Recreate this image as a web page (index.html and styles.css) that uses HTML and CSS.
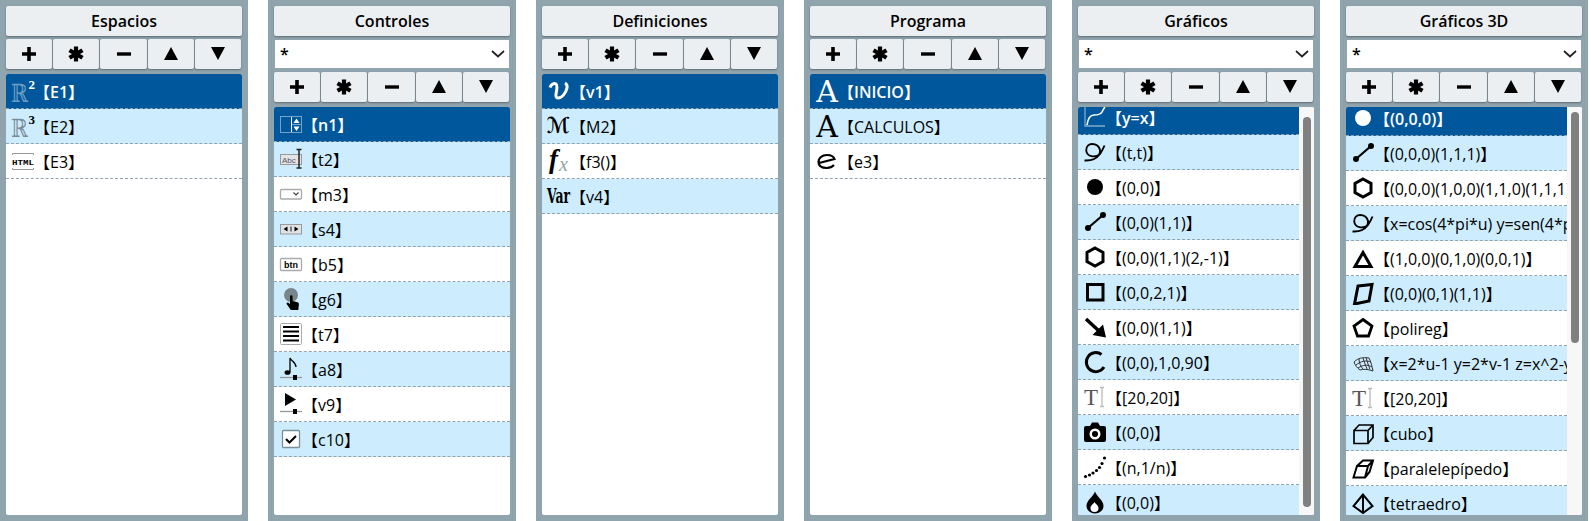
FILE: index.html
```html
<!DOCTYPE html>
<html lang="es">
<head>
<meta charset="utf-8">
<title>Descartes</title>
<link rel="stylesheet" href="styles.css">
</head>
<body>
<svg class="sprite" aria-hidden="true">
  <symbol id="b-plus" viewBox="0 0 24 24"><path d="M5 12h14M12 5v14" fill="none" stroke="#000" stroke-width="3.6"/></symbol>
  <symbol id="b-star" viewBox="0 0 24 24"><path d="M12 4.500v15M5.500 8.200l13 7.600M18.500 8.200l-13 7.600" fill="none" stroke="#000" stroke-width="4.200"/></symbol>
  <symbol id="b-minus" viewBox="0 0 24 24"><path d="M5 12h14" fill="none" stroke="#000" stroke-width="3.400"/></symbol>
  <symbol id="b-up" viewBox="0 0 24 24"><path d="M12 5l7 13H5z"/></symbol>
  <symbol id="b-down" viewBox="0 0 24 24"><path d="M5 5h14l-7 13z"/></symbol>

  <symbol id="i-spin" viewBox="0 0 24 24"><rect x="1.500" y="4.500" width="21" height="16" fill="none" stroke="currentColor" stroke-opacity=".45"/><path d="M12.500 5v15" stroke="currentColor"/><path d="M13 12.500h9" stroke="currentColor" stroke-opacity=".45"/><path d="M17.500 6.500l3 4.500h-6zM17.500 19l-3-4.500h6z" fill="currentColor"/></symbol>
  <symbol id="i-menu" viewBox="0 0 24 24"><rect x="1.500" y="7.500" width="21" height="9.500" rx="1" fill="#fff" stroke="#aaa" stroke-width="1.300"/><path d="M14.500 10.500l2.500 2.500 2.500-2.500" fill="none" stroke="#444" stroke-width="1.200"/></symbol>
  <symbol id="i-scroll" viewBox="0 0 24 24"><rect x="1.500" y="7.500" width="21" height="9.500" fill="#dfe3e6" stroke="#999"/><path d="M8.500 9.500v5l-4-2.500zM15.500 9.500v5l4-2.500z"/><path d="M12 9.500v5" stroke="#444" stroke-width="1.300"/></symbol>
  <symbol id="i-graphic" viewBox="0 0 24 24"><circle cx="12" cy="8" r="7" fill="#78868c"/><path d="M11 9.500a1.300 1.300 0 0 1 2.600 0V14l5 1.200c1.400.4 1.400 1.800 1.200 3.200L19.300 23h-7.500L7.800 17.200c-.8-1.200.8-2.200 1.800-1.300l1.400 1.200z"/></symbol>
  <symbol id="i-text" viewBox="0 0 24 24"><rect x="1.500" y="1.500" width="21" height="21" rx="1" fill="#fff" stroke="#aaa"/><path d="M4 5h16M4 9.500h16M4 14h16M4 18.500h16" stroke="#000" stroke-width="2.200"/></symbol>
  <symbol id="i-audio" viewBox="0 0 24 24"><ellipse cx="8.500" cy="15.500" rx="3" ry="2.300"/><path d="M11 15V1c1 3 6 4 6 9" fill="none" stroke="#000" stroke-width="1.300"/><path d="M1 20.500h22" stroke="#999" stroke-width="1.300"/><rect x="14" y="18" width="4" height="5"/></symbol>
  <symbol id="i-video" viewBox="0 0 24 24"><path d="M6 1l11 6.500L6 14z"/><path d="M1 19.500h22" stroke="#999" stroke-width="1.300"/><rect x="14" y="17" width="4" height="5"/></symbol>
  <symbol id="i-check" viewBox="0 0 24 24"><rect x="3.500" y="3.500" width="17" height="17" rx="1" fill="#fff" stroke="#78909c" stroke-width="1.300"/><path d="M7 12l3.500 3.500L17 9" fill="none" stroke="#000" stroke-width="2"/></symbol>

  <symbol id="i-v" viewBox="0 0 24 24"><path d="M3 8.500C4 5 7 4 9 5c2 2 .5 7 0 10-.3 2 0 4 2 4 4 0 8-5 9-10 .4-2-.3-4-2-5" fill="none" stroke="currentColor" stroke-width="3"/></symbol>
  <symbol id="i-e" viewBox="0 0 24 24"><path d="M4 14L19.500 10C18.500 7 15 6 12 6 7 6 3.500 9 3.500 13S7 19 12 19c3 0 5-1 7-3" fill="none" stroke="currentColor" stroke-width="2.200"/></symbol>

  <symbol id="i-curve" viewBox="0 0 24 24"><path d="M2 0v21h20" fill="none" stroke="currentColor" stroke-opacity=".5" stroke-width="1.300"/><path d="M4 20c1-7 3-10 7-10s7-1 8-3 2-4 3-5" fill="none" stroke="currentColor" stroke-width="1.600"/></symbol>
  <symbol id="i-loop" viewBox="0 0 24 24"><path d="M1.500 20.500C8 21 14 18 17 14c2-3 3.500-6 4.500-8.500M17 14c-5 4-13 3-13.800-3.500C3 6 6 4 9 4c4 0 7 2 8 6 .3 2-1 5-2 6" fill="none" stroke="currentColor" stroke-width="1.900"/></symbol>
  <symbol id="i-dot" viewBox="0 0 24 24"><circle cx="12" cy="12" r="8" fill="currentColor"/></symbol>
  <symbol id="i-seg" viewBox="0 0 24 24"><path d="M5 18L20 5" stroke="currentColor" stroke-width="2.200"/><circle cx="5" cy="18" r="3" fill="currentColor"/><circle cx="20" cy="5" r="3" fill="currentColor"/></symbol>
  <symbol id="i-hex" viewBox="0 0 24 24"><path d="M12 3l8 4.500v9L12 21l-8-4.500v-9z" fill="none" stroke="currentColor" stroke-width="3"/></symbol>
  <symbol id="i-rect" viewBox="0 0 24 24"><rect x="4.500" y="4.500" width="15.500" height="15.500" fill="none" stroke="currentColor" stroke-width="3"/></symbol>
  <symbol id="i-arrow" viewBox="0 0 24 24"><path d="M3 4l13 12" stroke="currentColor" stroke-width="3.500"/><path d="M23 22.500L9.500 20 20 9.500z" fill="currentColor"/></symbol>
  <symbol id="i-arc" viewBox="0 0 24 24"><path d="M18.500 4.500A9.500 9.500 0 1 0 21 17" fill="none" stroke="currentColor" stroke-width="3"/></symbol>
  <symbol id="i-cam" viewBox="0 0 24 24"><path d="M3 6h4l2-3.500h6L17 6h4a2 2 0 0 1 2 2v12a2 2 0 0 1-2 2H3a2 2 0 0 1-2-2V8a2 2 0 0 1 2-2z"/><circle cx="12" cy="14" r="5.500" fill="#fff"/><circle cx="12" cy="14" r="3"/></symbol>
  <symbol id="i-dots" viewBox="0 0 24 24"><g fill="#000"><circle cx="2.500" cy="21.500" r="1.600"/><circle cx="6.500" cy="20" r="1.600"/><circle cx="10" cy="18" r="1.600"/><circle cx="13.500" cy="15.500" r="1.600"/><circle cx="16.500" cy="12.500" r="1.600"/><circle cx="19" cy="8.500" r="1.600"/><circle cx="21.500" cy="3" r="1.600"/></g></symbol>
  <symbol id="i-drop" viewBox="0 0 24 24"><path d="M12 1.500c-1.500 5-8.500 8.500-8.500 14.500a8.500 7.500 0 0 0 17 0c0-6-7-9.500-8.500-14.500z"/><path d="M11.500 12c-1 2-4 3.500-4 6a4 4 0 0 0 8 0c0-2.500-3-4-4-6z" fill="#fff"/></symbol>

  <symbol id="i-beam" viewBox="0 0 24 24"><path d="M17 2.500h4M17 21.500h4M19 2.500v19" fill="none" stroke="#bbb" stroke-width="1.300"/></symbol>
  <symbol id="i-tri" viewBox="0 0 24 24"><path d="M12 6.500l8 14H4z" fill="none" stroke="currentColor" stroke-width="3"/></symbol>
  <symbol id="i-face" viewBox="0 0 24 24"><path d="M7 5l14-1.500-3 16.500-14.500 3z" fill="none" stroke="currentColor" stroke-width="3"/></symbol>
  <symbol id="i-pent" viewBox="0 0 24 24"><path d="M12 3.500l9 6.500-3.500 10h-11L3 10z" fill="none" stroke="currentColor" stroke-width="2.800"/></symbol>
  <symbol id="i-mesh" viewBox="0 0 24 24"><path d="M3 11C7 7 12 6 18 7c2 4 3 8 4 13-5-2-10-2-13-1-3-2-5-5-6-8zM5 14c5-4 10-5 15-3M7 17c5-3 9-4 14-1M8 8c0 4 2 8 4 10M12 7c1 4 3 8 4 11M15 6.500c1 4 3 9 4 12" fill="none" stroke="#333" stroke-width="1"/></symbol>
  <symbol id="i-cube" viewBox="0 0 24 24"><path d="M3 9.500h14v13H3zM3 9.500L8 4h14v12.500l-5 6M17 9.500L22 4" fill="none" stroke="currentColor" stroke-width="1.700"/></symbol>
  <symbol id="i-para" viewBox="0 0 24 24"><path d="M6 10h11l-3 11.500H2.500zM6 10l6-5.500h10L18.500 16 14 21.500M17 10l5-5.500" fill="none" stroke="currentColor" stroke-width="2"/></symbol>
  <symbol id="i-tetra" viewBox="0 0 24 24"><path d="M12 3.500L2.500 15 12 22l9.500-7zM12 3.500V22" fill="none" stroke="currentColor" stroke-width="2"/></symbol>
</svg>

<main class="app">

  <section class="panel">
    <h2 class="title">Espacios</h2>
    <div class="tools">
      <button class="tool"><svg class="tg"><use href="#b-plus"/></svg></button>
      <button class="tool"><svg class="tg"><use href="#b-star"/></svg></button>
      <button class="tool"><svg class="tg"><use href="#b-minus"/></svg></button>
      <button class="tool"><svg class="tg"><use href="#b-up"/></svg></button>
      <button class="tool"><svg class="tg"><use href="#b-down"/></svg></button>
    </div>
    <div class="listbox">
      <ul class="list">
        <li class="row sel"><svg class="ic" viewBox="0 0 24 24"><text x="0" y="23" class="t-bb" textLength="17" lengthAdjust="spacingAndGlyphs">ℝ</text><text x="17.500" y="10" class="t-sup">2</text></svg><span class="lbl">【E1】</span></li>
        <li class="row"><svg class="ic" viewBox="0 0 24 24"><text x="0" y="23" class="t-bb" textLength="17" lengthAdjust="spacingAndGlyphs">ℝ</text><text x="17.500" y="10" class="t-sup">3</text></svg><span class="lbl">【E2】</span></li>
        <li class="row"><svg class="ic" viewBox="0 0 24 24"><path d="M1.500 6V4.500h21V6M1.500 19v1.500h21V19" fill="none" stroke="#999"/><text x="1" y="15.500" class="t-html" textLength="22" lengthAdjust="spacingAndGlyphs">HTML</text></svg><span class="lbl">【E3】</span></li>
      </ul>
    </div>
  </section>

  <section class="panel">
    <h2 class="title">Controles</h2>
    <select class="filter"><option>*</option></select>
    <div class="tools">
      <button class="tool"><svg class="tg"><use href="#b-plus"/></svg></button>
      <button class="tool"><svg class="tg"><use href="#b-star"/></svg></button>
      <button class="tool"><svg class="tg"><use href="#b-minus"/></svg></button>
      <button class="tool"><svg class="tg"><use href="#b-up"/></svg></button>
      <button class="tool"><svg class="tg"><use href="#b-down"/></svg></button>
    </div>
    <div class="listbox">
      <ul class="list">
        <li class="row sel"><svg class="ic"><use href="#i-spin"/></svg><span class="lbl">【n1】</span></li>
        <li class="row"><svg class="ic" viewBox="0 0 24 24"><rect x="1.500" y="7.500" width="21" height="10" fill="#e4e4e4" stroke="#999"/><text x="3" y="16" class="t-abc">Abc</text><path d="M17.500 2.500h5M17.500 21h5M20 2.500V21" fill="none" stroke="#222" stroke-width="1.500"/></svg><span class="lbl">【t2】</span></li>
        <li class="row"><svg class="ic"><use href="#i-menu"/></svg><span class="lbl">【m3】</span></li>
        <li class="row"><svg class="ic"><use href="#i-scroll"/></svg><span class="lbl">【s4】</span></li>
        <li class="row"><svg class="ic" viewBox="0 0 24 24"><rect x="1.500" y="6.500" width="21" height="12" rx="1" fill="#fff" stroke="#aaa" stroke-width="1.300"/><text x="12" y="16" class="t-btn">btn</text></svg><span class="lbl">【b5】</span></li>
        <li class="row"><svg class="ic"><use href="#i-graphic"/></svg><span class="lbl">【g6】</span></li>
        <li class="row"><svg class="ic"><use href="#i-text"/></svg><span class="lbl">【t7】</span></li>
        <li class="row"><svg class="ic"><use href="#i-audio"/></svg><span class="lbl">【a8】</span></li>
        <li class="row"><svg class="ic"><use href="#i-video"/></svg><span class="lbl">【v9】</span></li>
        <li class="row"><svg class="ic"><use href="#i-check"/></svg><span class="lbl">【c10】</span></li>
      </ul>
    </div>
  </section>

  <section class="panel">
    <h2 class="title">Definiciones</h2>
    <div class="tools">
      <button class="tool"><svg class="tg"><use href="#b-plus"/></svg></button>
      <button class="tool"><svg class="tg"><use href="#b-star"/></svg></button>
      <button class="tool"><svg class="tg"><use href="#b-minus"/></svg></button>
      <button class="tool"><svg class="tg"><use href="#b-up"/></svg></button>
      <button class="tool"><svg class="tg"><use href="#b-down"/></svg></button>
    </div>
    <div class="listbox">
      <ul class="list">
        <li class="row sel"><svg class="ic"><use href="#i-v"/></svg><span class="lbl">【v1】</span></li>
        <li class="row"><svg class="ic" viewBox="0 0 24 24"><text x="0" y="19" class="t-m" textLength="23" lengthAdjust="spacingAndGlyphs">ℳ</text></svg><span class="lbl">【M2】</span></li>
        <li class="row"><svg class="ic" viewBox="0 0 24 24"><text x="2" y="19" class="t-f">f</text><text x="12" y="22" class="t-x">x</text></svg><span class="lbl">【f3()】</span></li>
        <li class="row"><svg class="ic" viewBox="0 0 24 24"><text x="0" y="19" class="t-var" textLength="23" lengthAdjust="spacingAndGlyphs">Var</text></svg><span class="lbl">【v4】</span></li>
      </ul>
    </div>
  </section>

  <section class="panel">
    <h2 class="title">Programa</h2>
    <div class="tools">
      <button class="tool"><svg class="tg"><use href="#b-plus"/></svg></button>
      <button class="tool"><svg class="tg"><use href="#b-star"/></svg></button>
      <button class="tool"><svg class="tg"><use href="#b-minus"/></svg></button>
      <button class="tool"><svg class="tg"><use href="#b-up"/></svg></button>
      <button class="tool"><svg class="tg"><use href="#b-down"/></svg></button>
    </div>
    <div class="listbox">
      <ul class="list">
        <li class="row sel"><svg class="ic" viewBox="0 0 24 24"><text x="12" y="23" class="t-a">A</text></svg><span class="lbl">【INICIO】</span></li>
        <li class="row"><svg class="ic" viewBox="0 0 24 24"><text x="12" y="23" class="t-a">A</text></svg><span class="lbl">【CALCULOS】</span></li>
        <li class="row"><svg class="ic"><use href="#i-e"/></svg><span class="lbl">【e3】</span></li>
      </ul>
    </div>
  </section>

  <section class="panel">
    <h2 class="title">Gráficos</h2>
    <select class="filter"><option>*</option></select>
    <div class="tools">
      <button class="tool"><svg class="tg"><use href="#b-plus"/></svg></button>
      <button class="tool"><svg class="tg"><use href="#b-star"/></svg></button>
      <button class="tool"><svg class="tg"><use href="#b-minus"/></svg></button>
      <button class="tool"><svg class="tg"><use href="#b-up"/></svg></button>
      <button class="tool"><svg class="tg"><use href="#b-down"/></svg></button>
    </div>
    <div class="listbox">
      <ul class="list scrolled-7">
        <li class="row sel"><svg class="ic"><use href="#i-curve"/></svg><span class="lbl">【y=x】</span></li>
        <li class="row"><svg class="ic"><use href="#i-loop"/></svg><span class="lbl">【(t,t)】</span></li>
        <li class="row"><svg class="ic"><use href="#i-dot"/></svg><span class="lbl">【(0,0)】</span></li>
        <li class="row"><svg class="ic"><use href="#i-seg"/></svg><span class="lbl">【(0,0)(1,1)】</span></li>
        <li class="row"><svg class="ic"><use href="#i-hex"/></svg><span class="lbl">【(0,0)(1,1)(2,-1)】</span></li>
        <li class="row"><svg class="ic"><use href="#i-rect"/></svg><span class="lbl">【(0,0,2,1)】</span></li>
        <li class="row"><svg class="ic"><use href="#i-arrow"/></svg><span class="lbl">【(0,0)(1,1)】</span></li>
        <li class="row"><svg class="ic"><use href="#i-arc"/></svg><span class="lbl">【(0,0),1,0,90】</span></li>
        <li class="row"><svg class="ic" viewBox="0 0 24 24"><text x="8" y="20" class="t-t">T</text><use href="#i-beam" width="24" height="24"/></svg><span class="lbl">【[20,20]】</span></li>
        <li class="row"><svg class="ic"><use href="#i-cam"/></svg><span class="lbl">【(0,0)】</span></li>
        <li class="row"><svg class="ic"><use href="#i-dots"/></svg><span class="lbl">【(n,1/n)】</span></li>
        <li class="row"><svg class="ic"><use href="#i-drop"/></svg><span class="lbl">【(0,0)】</span></li>
      </ul>
      <div class="track"><div class="thumb thumb-2d"></div></div>
    </div>
  </section>

  <section class="panel">
    <h2 class="title">Gráficos 3D</h2>
    <select class="filter"><option>*</option></select>
    <div class="tools">
      <button class="tool"><svg class="tg"><use href="#b-plus"/></svg></button>
      <button class="tool"><svg class="tg"><use href="#b-star"/></svg></button>
      <button class="tool"><svg class="tg"><use href="#b-minus"/></svg></button>
      <button class="tool"><svg class="tg"><use href="#b-up"/></svg></button>
      <button class="tool"><svg class="tg"><use href="#b-down"/></svg></button>
    </div>
    <div class="listbox">
      <ul class="list scrolled-6">
        <li class="row sel"><svg class="ic"><use href="#i-dot"/></svg><span class="lbl">【(0,0,0)】</span></li>
        <li class="row"><svg class="ic"><use href="#i-seg"/></svg><span class="lbl">【(0,0,0)(1,1,1)】</span></li>
        <li class="row"><svg class="ic"><use href="#i-hex"/></svg><span class="lbl">【(0,0,0)(1,0,0)(1,1,0)(1,1,1)】</span></li>
        <li class="row"><svg class="ic"><use href="#i-loop"/></svg><span class="lbl">【x=cos(4*pi*u) y=sen(4*pi*u) z=u】</span></li>
        <li class="row"><svg class="ic"><use href="#i-tri"/></svg><span class="lbl">【(1,0,0)(0,1,0)(0,0,1)】</span></li>
        <li class="row"><svg class="ic"><use href="#i-face"/></svg><span class="lbl">【(0,0)(0,1)(1,1)】</span></li>
        <li class="row"><svg class="ic"><use href="#i-pent"/></svg><span class="lbl">【polireg】</span></li>
        <li class="row"><svg class="ic"><use href="#i-mesh"/></svg><span class="lbl">【x=2*u-1 y=2*v-1 z=x^2-y^2】</span></li>
        <li class="row"><svg class="ic" viewBox="0 0 24 24"><text x="8" y="20" class="t-t">T</text><use href="#i-beam" width="24" height="24"/></svg><span class="lbl">【[20,20]】</span></li>
        <li class="row"><svg class="ic"><use href="#i-cube"/></svg><span class="lbl">【cubo】</span></li>
        <li class="row"><svg class="ic"><use href="#i-para"/></svg><span class="lbl">【paralelepípedo】</span></li>
        <li class="row"><svg class="ic"><use href="#i-tetra"/></svg><span class="lbl">【tetraedro】</span></li>
      </ul>
      <div class="track"><div class="thumb thumb-3d"></div></div>
    </div>
  </section>

</main>
</body>
</html>
```
FILE: styles.css
```css
* { box-sizing: border-box; }
html, body { margin: 0; height: 100%; background: #fff; overflow: hidden; }
body { font-family: "Open Sans", "Noto Sans CJK JP", sans-serif; color: #000; }
.sprite { width: 0; height: 0; position: absolute; overflow: hidden; }
.app { display: flex; gap: 20px; height: 521px; }
.panel { width: 248px; flex: none; height: 100%; padding: 6px; background: #90a4ae; display: flex; flex-direction: column; }
.title { margin: 0; height: 30px; flex: none; background: #eceff1; border-radius: 2px; box-shadow: 0 1px 2px rgba(0,0,0,.35); font-size: 16px; font-weight: 600; line-height: 30px; text-align: center; }
.filter { flex: none; display: block; height: 28px; width: 234px; margin: 4px 0 0 1px; padding: 0 0 0 5px; border: 0; border-radius: 0; appearance: none; background: #fff url("data:image/svg+xml,%3Csvg xmlns='http://www.w3.org/2000/svg' width='14' height='8'%3E%3Cpath d='M1 1l6 5.500L13 1' fill='none' stroke='%23222' stroke-width='1.700'/%3E%3C/svg%3E") no-repeat right 4px center; color: #000; font: 600 16px "Open Sans", sans-serif; }
.tools { flex: none; display: grid; grid-template-columns: 46px 46px 47px 46px 46px; gap: 1px; height: 30px; margin-top: 3px; }
.filter + .tools { margin-top: 4px; }
.tool { display: flex; align-items: center; justify-content: center; padding: 0; border: 0; background: #eceff1; border-radius: 2px; box-shadow: 0 1px 2px rgba(0,0,0,.35); }
.tg { width: 24px; height: 24px; display: block; }
.listbox { flex: 1; min-height: 0; margin-top: 5px; display: flex; background: #fff; border-radius: 2px; overflow: hidden; }
.list { flex: 1; min-width: 0; margin: 0; padding: 0; list-style: none; overflow: hidden; }
.scrolled-7 > .row:first-child { margin-top: -7px; }
.scrolled-6 > .row:first-child { margin-top: -6px; }
.track { flex: none; width: 15px; background: #f7f7f7; padding-left: 4px; }
.thumb { width: 8px; background: #808080; border-radius: 4px; }
.thumb-2d { margin-top: 10px; height: 390px; }
.thumb-3d { margin-top: 5px; height: 231px; }
.row { height: 35px; display: flex; align-items: center; padding-left: 5px; border-bottom: 1px dashed #90a4ae; white-space: nowrap; overflow: hidden; color: #000; }
.row:nth-child(even) { background: #cdedff; }
.row.sel { background: #01579b; color: #fff; }
.ic { width: 24px; height: 24px; flex: none; display: block; overflow: visible; }
.lbl { font-size: 16px; line-height: 22px; margin-left: -1px; position: relative; top: 1px; }
.sel .lbl { font-weight: 600; }
.t-bb { font: 25px "DejaVu Serif", serif; fill: currentColor; fill-opacity: .42; }
.t-sup { font: bold 13px "Liberation Serif", serif; fill: currentColor; }
.t-html { font: bold 8px "Liberation Mono", monospace; }
.t-abc { font: 8px "Liberation Sans", sans-serif; fill: #556; }
.t-btn { font: bold 9px "Liberation Sans", sans-serif; text-anchor: middle; }
.t-m { font: bold 22px "DejaVu Sans", sans-serif; fill: currentColor; }
.t-f { font: italic bold 27px "Liberation Serif", serif; fill: currentColor; }
.t-x { font: italic 20px "Liberation Serif", serif; fill: #99a3a3; }
.t-var { font: bold 20px "DejaVu Serif", serif; fill: currentColor; }
.t-a { font: 30px "DejaVu Serif", serif; fill: currentColor; text-anchor: middle; }
.t-t { font: 23px "Liberation Serif", serif; fill: #555; text-anchor: middle; }
```
